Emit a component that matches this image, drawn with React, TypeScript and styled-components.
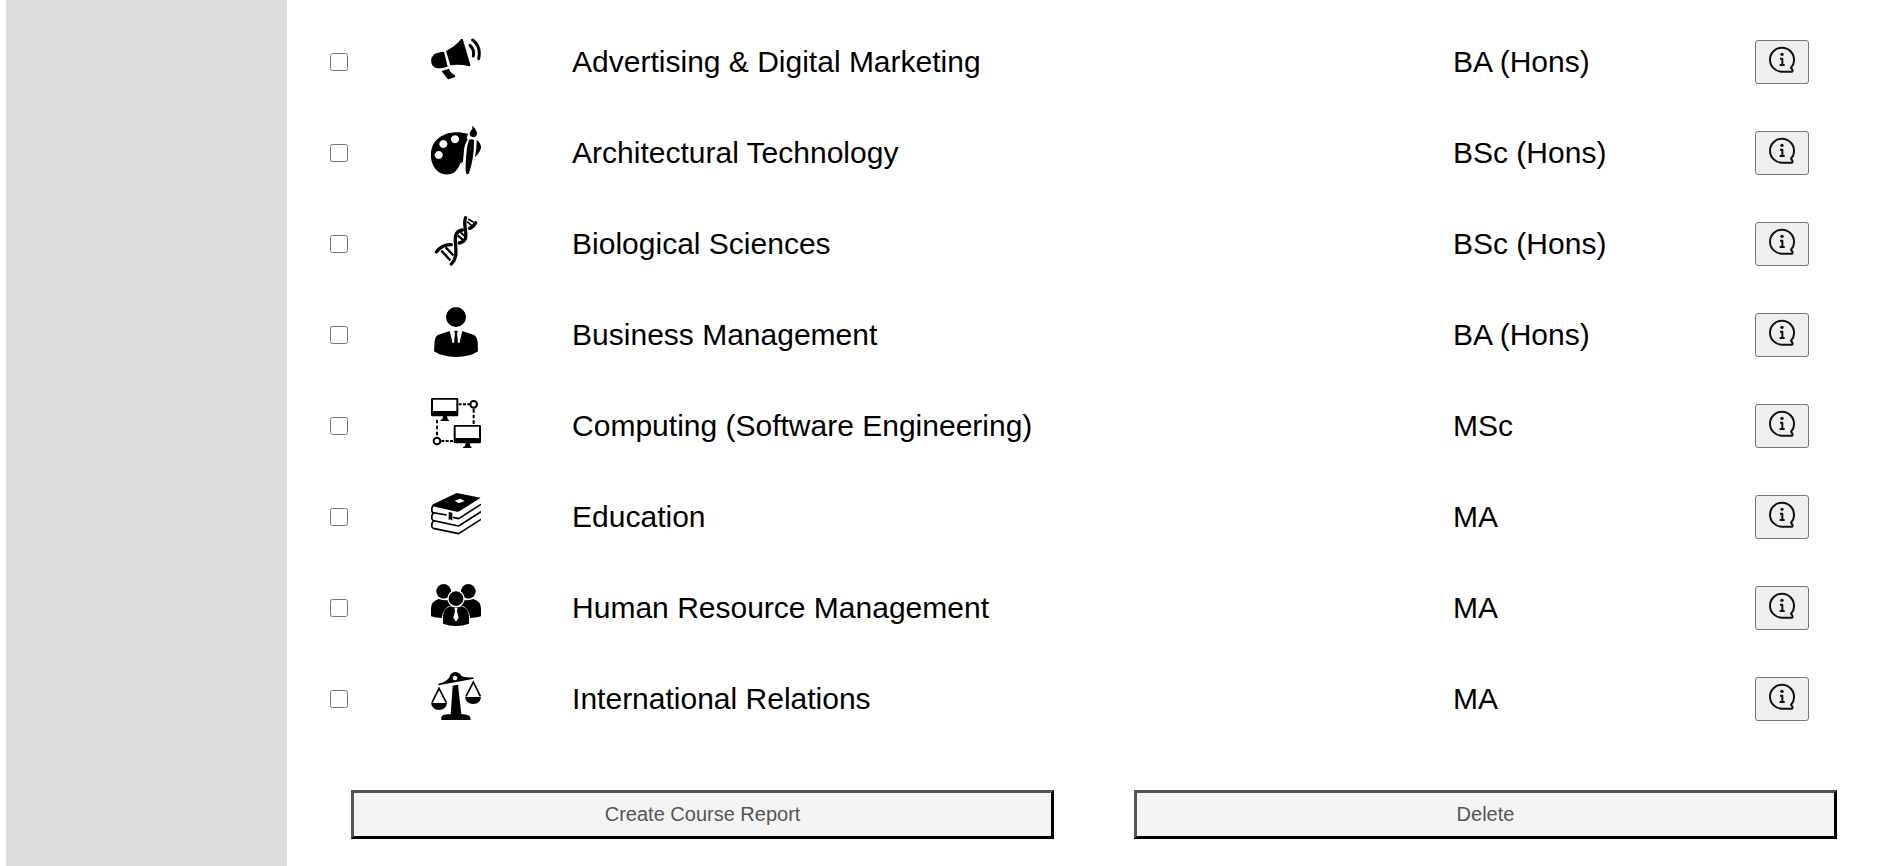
import React, { useState } from "react";
import styled, { createGlobalStyle } from "styled-components";

const GlobalStyle = createGlobalStyle`
  *, *::before, *::after { box-sizing: border-box; }
  body {
    margin: 0;
    background: #fff;
    color: #000;
    font-family: "Liberation Sans", Arial, Helvetica, sans-serif;
  }
`;

const Page = styled.div`
  display: flex;
  min-height: 100vh;
  padding-left: 6px;
`;

const Sidebar = styled.aside`
  flex: none;
  width: 15%;
  background: #dcdcdc;
`;

const Main = styled.main`
  flex: 1;
  min-width: 0;
  padding: 16px 0 27px;
`;

const TableArea = styled.div`
  padding: 0 71px 0 43px;
`;

const CourseTable = styled.table`
  width: 100%;
  table-layout: fixed;
  border-collapse: collapse;
  font-size: 30px;
`;

const Col = styled.col<{ $width?: number }>`
  width: ${({ $width }) => ($width ? `${$width}px` : "auto")};
`;

const Row = styled.tr`
  height: 91px;
`;

const Cell = styled.td`
  padding: 0;
  vertical-align: middle;
`;

const IconCell = styled(Cell)`
  padding-bottom: 6px;
`;

const Tick = styled.input`
  display: block;
  width: 18px;
  height: 18px;
  margin: 0;
`;

const CourseIcon = styled.svg`
  display: block;
  width: 50px;
  height: 50px;
`;

const InfoButton = styled.button`
  display: flex;
  align-items: center;
  justify-content: center;
  width: 54px;
  height: 44px;
  padding: 0;
  border: 1px solid #767676;
  border-radius: 3px;
  background: #efefef;
  cursor: pointer;
`;

const InfoGlyph = styled.svg`
  width: 32px;
  height: 32px;
`;

const Actions = styled.div`
  display: flex;
  gap: 80px;
  padding: 46px 43px 0 64px;
`;

const ActionButton = styled.button`
  flex: 1;
  height: 49px;
  padding: 0;
  border: 3px solid;
  border-color: #555 #000 #000 #555;
  background: #f4f4f4;
  color: #555;
  font-family: inherit;
  font-size: 20px;
  cursor: pointer;
`;

type Drawing = { viewBox: string; art: React.ReactNode };

const megaphone: Drawing = {
  viewBox: "33 27 150 150",
  art: (
    <>
      <path d="M72 80 L83 125 Q64 130 55 130 Q40 129 35 117 Q30 100 41 89 Q47 83 72 80Z" />
      <path d="M78 78 Q106 64 123 43 Q127 39 129 45 L151 119 Q152 124 147 124 Q119 117 91 121Z" />
      <path d="M65 138 L87 131 Q91 143 105 151 Q107 154 103 157 L86 163 Q83 163 81 160Z" />
      <g fill="none" stroke="#000" strokeWidth="9" strokeLinecap="round">
        <path d="M150 61 Q164 74 160 93" />
        <path d="M158 45 Q184 65 176 101" />
      </g>
    </>
  ),
};

const palette: Drawing = {
  viewBox: "33 30 150 150",
  art: (
    <>
      <path
        fillRule="evenodd"
        d="M144 57 C100 44 57 57 40 88 C23 121 36 172 73 178 C98 181 112 167 119 149 Q121 142 129 141 L132 104 Q135 84 143 74 L140 68ZM105 61a12 12 0 1 0 .1 0ZM70 75a12 12 0 1 0 .1 0ZM56 108a12 12 0 1 0 .1 0Z"
      />
      <path d="M157 32 Q171 45 171 56 Q170 66 159 66 Q149 65 149 56 Q150 48 157 42Z" />
      <path d="M147 75 Q155 71 162 75 Q163 127 147 175 Q144 180 140 177 Q136 172 137 147 Q139 95 147 75Z" />
      <path d="M170 74 Q183 84 183 98 Q181 111 165 126 Q170 103 170 74Z" />
    </>
  ),
};

const dna: Drawing = {
  viewBox: "33 27 150 150",
  art: (
    <g fill="none" stroke="#000" strokeLinecap="round">
      <g strokeWidth="10">
        <path d="M49 135 Q66 112 94 113" />
        <path d="M94 171 C111 155 108 135 107 113 C104 89 105 73 127 69" />
        <path d="M118 108 C143 103 138 84 136 67 Q132 43 137 32" />
        <path d="M149 64 Q160 60 167 47" />
      </g>
      <g strokeWidth="7" strokeLinecap="butt">
        <path d="M64 131 L91 160" />
        <path d="M77 121 L100 145" />
        <path d="M113 85 L129 99" />
        <path d="M121 76 L135 88" strokeWidth="6" />
        <path d="M141 44 L158 58" strokeWidth="5" />
        <path d="M145 36 L161 46" strokeWidth="5" />
      </g>
    </g>
  ),
};

const executive: Drawing = {
  viewBox: "33 27 150 150",
  art: (
    <>
      <circle cx="108" cy="57" r="30" />
      <path d="M89 99 L98 136 L102 134 L105 106 L102 101 L105 98 H111 L114 101 L111 106 L114 134 L118 136 L127 99 L162 111 Q171 116 173 132 L174 160 Q150 177 108 177 Q65 176 42 160 L44 128 Q45 116 53 111Z" />
    </>
  ),
};

const Monitor = ({ x, y }: { x: number; y: number }) => (
  <g transform={`translate(${x} ${y})`}>
    <path
      fillRule="evenodd"
      d="M4 0 H78 Q82 0 82 4 V50 Q82 55 78 55 H48 L50 63 L54 67 V69 H28 V67 L34 63 L36 55 H4 Q0 55 0 50 V4 Q0 0 4 0ZM6 5 V39 H76 V5Z"
    />
  </g>
);

const network: Drawing = {
  viewBox: "33 24 150 150",
  art: (
    <>
      <Monitor x={33} y={24} />
      <Monitor x={101} y={105} />
      <g fill="none" stroke="#000" strokeWidth="6">
        <circle cx="161" cy="43" r="10" />
        <circle cx="51" cy="153" r="10" />
        <path d="M116 43 H150" strokeDasharray="9 4" />
        <path d="M161 57 V104" strokeDasharray="11 6" />
        <path d="M51 89 V143" strokeDasharray="11 7" />
        <path d="M64 153 H101" strokeDasharray="9 4" />
      </g>
    </>
  ),
};

const books: Drawing = {
  viewBox: "33 27 150 150",
  art: (
    <>
      <path
        fillRule="evenodd"
        d="M110 39 L182 53 L118 94 Q115 96 111 95 L38 79 Q35 76 39 73ZM104 62 L117 70 L134 63 L121 56Z"
      />
      <g fill="none" stroke="#000" strokeWidth="5" strokeLinejoin="round">
        <path d="M39 77 Q32 88 38 98 L80 105 M99 112 L116 116 L183 73" />
        <path d="M40 99 Q30 113 40 122 L116 138 L183 95" />
        <path d="M40 123 Q30 137 40 145 L116 161 L183 118" />
      </g>
      <path d="M86 96 L97 98 V122 L91 118 L86 120Z" />
    </>
  ),
};

const team: Drawing = {
  viewBox: "33 24 150 150",
  art: (
    <>
      <circle cx="71" cy="58" r="22" />
      <circle cx="145" cy="58" r="22" />
      <path d="M33 133 V112 Q33 87 56 81 Q74 86 84 84 Q88 94 95 100 Q69 106 65 138 Q47 138 33 133Z" />
      <path d="M183 133 V112 Q183 87 160 81 Q142 86 132 84 Q128 94 121 100 Q147 106 151 138 Q169 138 183 133Z" />
      <circle cx="108" cy="80" r="26" fill="#fff" />
      <circle cx="108" cy="80" r="22" />
      <path
        fillRule="evenodd"
        d="M69 155 V130 Q72 108 92 103 Q108 110 124 103 Q144 108 147 130 V155 Q128 162 108 162 Q87 162 69 155ZM103 108 L105 117 L100 137 L108 149 L116 137 L111 117 L113 108Z"
      />
    </>
  ),
};

const scales: Drawing = {
  viewBox: "33 27 150 150",
  art: (
    <>
      <path
        fillRule="evenodd"
        d="M54 66 Q82 59 88 46 Q92 31 105 30 Q118 30 124 41 Q130 47 158 46 L162 50 L56 70ZM105 41a7 7 0 1 0 .1 0Z"
      />
      <path d="M98 71 L114 68 Q119 113 124 156 Q148 158 150 164 L152 174 H64 Q62 161 72 158 Q80 156 92 157Z" />
      <g fill="none" stroke="#000" strokeWidth="5">
        <path d="M36 122 L57 79 L79 122" />
        <path d="M138 103 L160 60 L181 103" />
      </g>
      <path d="M33 123 H81 Q78 144 57 144 Q36 143 33 123Z" />
      <path d="M135 105 H183 Q181 126 160 126 Q138 125 135 105Z" />
    </>
  ),
};

const courses = [
  { name: "Advertising & Digital Marketing", award: "BA (Hons)", icon: megaphone },
  { name: "Architectural Technology", award: "BSc (Hons)", icon: palette },
  { name: "Biological Sciences", award: "BSc (Hons)", icon: dna },
  { name: "Business Management", award: "BA (Hons)", icon: executive },
  { name: "Computing (Software Engineering)", award: "MSc", icon: network },
  { name: "Education", award: "MA", icon: books },
  { name: "Human Resource Management", award: "MA", icon: team },
  { name: "International Relations", award: "MA", icon: scales },
];

export default function App() {
  const [selected, setSelected] = useState<string[]>([]);

  const toggle = (name: string) =>
    setSelected((names) =>
      names.includes(name) ? names.filter((n) => n !== name) : [...names, name]
    );

  return (
    <>
      <GlobalStyle />
      <Page>
        <Sidebar />
        <Main>
          <TableArea>
            <CourseTable>
              <colgroup>
                <Col $width={101} />
                <Col $width={141} />
                <Col />
                <Col $width={302} />
                <Col $width={54} />
              </colgroup>
              <tbody>
                {courses.map(({ name, award, icon }, index) => (
                  <Row key={name}>
                    <Cell>
                      <Tick
                        type="checkbox"
                        id={`course-${index}`}
                        checked={selected.includes(name)}
                        onChange={() => toggle(name)}
                      />
                    </Cell>
                    <IconCell>
                      <CourseIcon viewBox={icon.viewBox} aria-hidden="true">
                        {icon.art}
                      </CourseIcon>
                    </IconCell>
                    <Cell>
                      <label htmlFor={`course-${index}`}>{name}</label>
                    </Cell>
                    <Cell>{award}</Cell>
                    <Cell>
                      <InfoButton type="button" aria-label={`About ${name}`}>
                        <InfoGlyph viewBox="78 48 96 96" aria-hidden="true">
                          <g fill="none" stroke="#111" strokeWidth="6" strokeLinejoin="round">
                            <path d="M126 53 A36 36 0 0 0 126 125 H156 Q159 123 157 119 L153 113 Q163 102 162 89 A36 36 0 0 0 126 53Z" />
                            <path d="M120 86 H127 V105 M119 105 H134" />
                          </g>
                          <circle cx="126" cy="73" r="5" fill="#111" />
                        </InfoGlyph>
                      </InfoButton>
                    </Cell>
                  </Row>
                ))}
              </tbody>
            </CourseTable>
          </TableArea>
          <Actions>
            <ActionButton type="button">Create Course Report</ActionButton>
            <ActionButton type="button">Delete</ActionButton>
          </Actions>
        </Main>
      </Page>
    </>
  );
}
